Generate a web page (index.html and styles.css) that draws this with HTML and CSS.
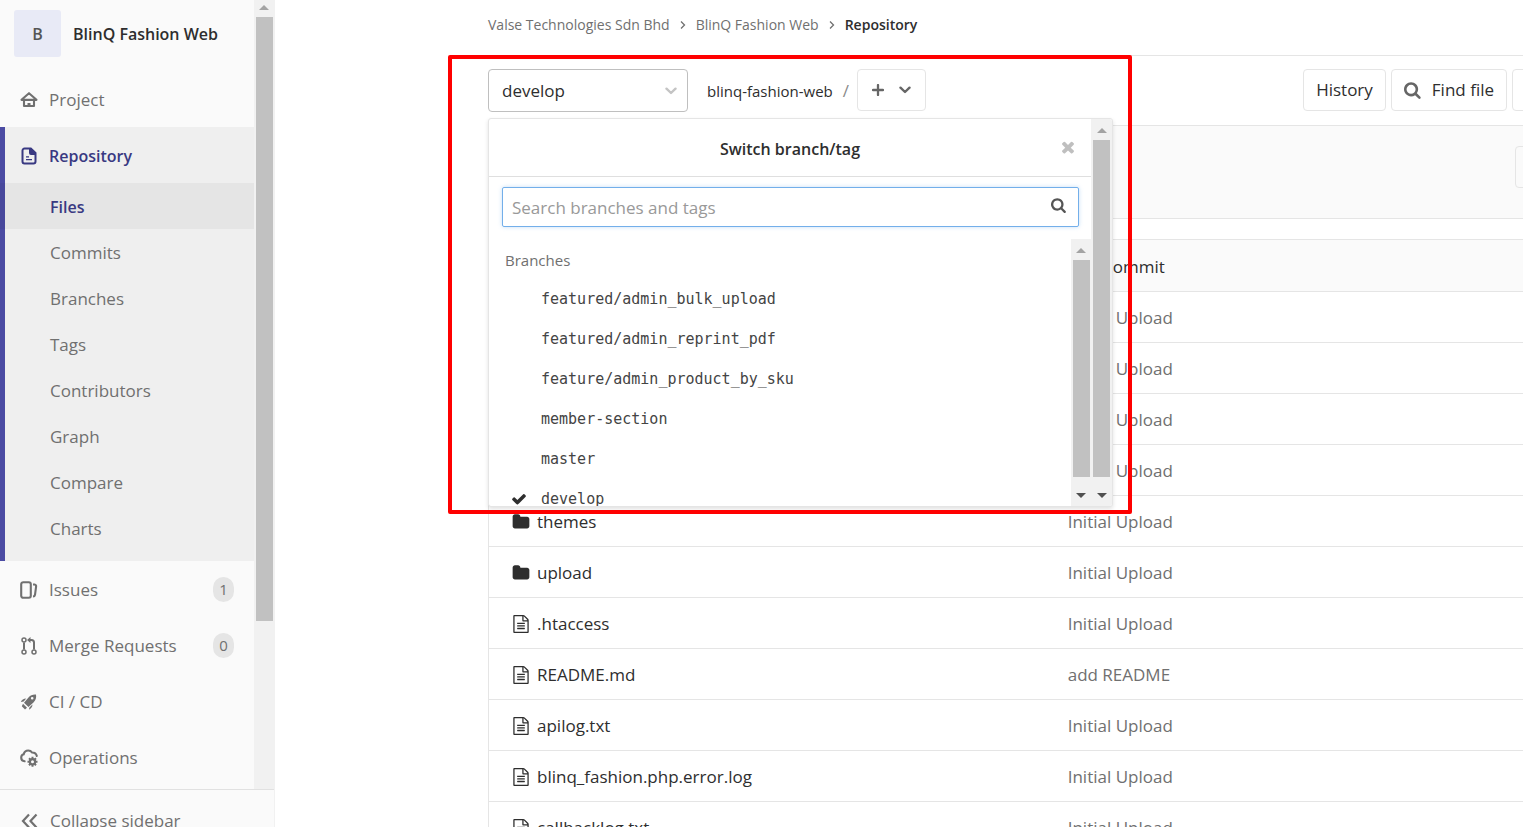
FILE: index.html
```html
<!DOCTYPE html>
<html lang="en">
<head>
<meta charset="utf-8">
<title>Repository · BlinQ Fashion Web</title>
<link rel="stylesheet" href="styles.css">
</head>
<body>
<svg class="sprite" aria-hidden="true">
  <symbol id="folder" viewBox="0 0 1792 1792"><path d="M1728 608v704q0 92-66 158t-158 66h-1216q-92 0-158-66t-66-158v-960q0-92 66-158t158-66h320q92 0 158 66t66 158v32h672q92 0 158 66t66 158z"/></symbol>
  <symbol id="file" viewBox="0 0 1792 1792"><path d="M1596 380q28 28 48 76t20 88v1152q0 40-28 68t-68 28h-1344q-40 0-68-28t-28-68v-1600q0-40 28-68t68-28h896q40 0 88 20t76 48zm-444-244v376h376q-10-29-22-41l-313-313q-12-12-41-22zm384 1528v-1024h-416q-40 0-68-28t-28-68v-416h-768v1536h1280zm-1024-864q0-14 9-23t23-9h704q14 0 23 9t9 23v64q0 14-9 23t-23 9h-704q-14 0-23-9t-9-23v-64zm736 224q14 0 23 9t9 23v64q0 14-9 23t-23 9h-704q-14 0-23-9t-9-23v-64q0-14 9-23t23-9h704zm0 256q14 0 23 9t9 23v64q0 14-9 23t-23 9h-704q-14 0-23-9t-9-23v-64q0-14 9-23t23-9h704z"/></symbol>
  <symbol id="search" viewBox="0 0 1792 1792"><path d="M1152 832q0-185-131.5-316.5t-316.5-131.5-316.5 131.5-131.5 316.5 131.5 316.5 316.5 131.5 316.5-131.5 131.5-316.5zm512 832q0 52-38 90t-90 38q-54 0-90-38l-343-342q-179 124-399 124-143 0-273.5-55.5t-225-150-150-225-55.5-273.5 55.5-273.5 150-225 225-150 273.5-55.5 273.5 55.5 225 150 150 225 55.5 273.5q0 220-124 399l343 343q37 37 37 90z"/></symbol>
  <symbol id="check" viewBox="0 0 1792 1792"><path d="M1671 566q0 40-28 68l-724 724-136 136q-28 28-68 28t-68-28l-136-136-362-362q-28-28-28-68t28-68l136-136q28-28 68-28t68 28l294 295 656-657q28-28 68-28t68 28l136 136q28 28 28 68z"/></symbol>
  <symbol id="times" viewBox="0 0 1792 1792"><path d="M1490 1322q0 40-28 68l-136 136q-28 28-68 28t-68-28l-294-294-294 294q-28 28-68 28t-68-28l-136-136q-28-28-28-68t28-68l294-294-294-294q-28-28-28-68t28-68l136-136q28-28 68-28t68 28l294 294 294-294q28-28 68-28t68 28l136 136q28 28 28 68t-28 68l-294 294 294 294q28 28 28 68z"/></symbol>
  <symbol id="chevron" viewBox="0 0 12 8"><path d="M1.5 1.700 6 6l4.500-4.300" fill="none" stroke="currentColor" stroke-width="2.400" stroke-linecap="round" stroke-linejoin="round"/></symbol>
  <symbol id="angle" viewBox="0 0 6 10"><path d="m1 1.500 3.500 3.500L1 8.500" fill="none" stroke="currentColor" stroke-width="1.300"/></symbol>
</svg>

<aside class="sidebar">
  <div class="sidebar-scroll">
    <nav class="nav">
      <a class="project" href="#"><span class="avatar">B</span><span>BlinQ Fashion Web</span></a>
      <a class="item" href="#"><svg class="icon" viewBox="0 0 18 18"><path d="M1.500 8.800 9 2.200l7.500 6.600M4 8.600v6.400h10V8.600M2 8.900h14" fill="none" stroke="currentColor" stroke-width="2.100" stroke-linecap="round" stroke-linejoin="round"/><path d="M7.500 12h3v3.500h-3z"/></svg>Project</a>
      <div class="group">
        <a class="item current" href="#"><svg class="icon" viewBox="0 0 18 18"><path d="M4.500 1.500h6.300L15.500 6v8.500a2 2 0 0 1-2 2h-9a2 2 0 0 1-2-2v-11a2 2 0 0 1 2-2z" fill="none" stroke="currentColor" stroke-width="2"/><path d="M9 1.500h2.500l4 4V8H11a2 2 0 0 1-2-2zM6 9.300h3v1.300H6zM6 12h6v1.300H6z"/></svg>Repository</a>
        <a class="sub active" href="#">Files</a>
        <a class="sub" href="#">Commits</a>
        <a class="sub" href="#">Branches</a>
        <a class="sub" href="#">Tags</a>
        <a class="sub" href="#">Contributors</a>
        <a class="sub" href="#">Graph</a>
        <a class="sub" href="#">Compare</a>
        <a class="sub" href="#">Charts</a>
      </div>
      <a class="item" href="#"><svg class="icon" viewBox="0 0 18 18"><rect x="1.200" y="1.200" width="9.600" height="15.600" rx="2" fill="none" stroke="currentColor" stroke-width="2.100"/><path d="M13 3.500h1.500c1 .2 1.800 1 1.600 2.200L15 13.800c-.2 1.100-.9 1.700-2 1.700" fill="none" stroke="currentColor" stroke-width="2.100"/></svg>Issues<span class="badge">1</span></a>
      <a class="item" href="#"><svg class="icon" viewBox="0 0 18 18" fill="none" stroke="currentColor"><g class="hollow" stroke-width="1.500"><circle cx="4" cy="3" r="2"/><circle cx="4" cy="15" r="2"/><circle cx="14" cy="15" r="2"/><path d="M4 5.500v7M14 12.500V5.500c0-1.500-.8-2.500-2.500-2.500H9" stroke-width="2"/></g><path d="M10.500 0v6L7 3z" fill="currentColor" stroke="none"/></svg>Merge Requests<span class="badge">0</span></a>
      <a class="item" href="#"><svg class="icon" viewBox="0 0 18 18"><path fill-rule="evenodd" d="M16 1.500c.5 3-.2 5.700-2.300 7.800L8.500 14 4 9.700l4.700-5.500C10.500 2.200 13 1.200 16 1.500zM12.200 4a1.300 1.300 0 1 0 0 2.600 1.300 1.300 0 0 0 0-2.600z"/><path d="M6.200 5.500 3.700 8.500l-2.900.4c.9-2 2.700-3.200 5.400-3.400zM12.500 11.600c-.1 2.600-1.300 4-3.600 5.100l.5-2.300zM3 10.800l4 4-2 1.600-3.200-3.200z"/></svg>CI / CD</a>
      <a class="item" href="#"><svg class="icon" viewBox="0 0 18 18"><path d="M4.600 12.300C2.500 12 1.200 10.500 1.200 8.700c0-1.600 1-3 2.500-3.400C4.200 3 6 1.500 8.200 1.500c1.700 0 3 .7 3.900 2 2.400 0 4.200 1.300 4.700 3.500" fill="none" stroke="currentColor" stroke-width="2.100" stroke-linecap="round"/><circle cx="12.500" cy="12.700" r="2.600" fill="none" stroke="currentColor" stroke-width="2.200"/><path d="M12.500 7.700v2M12.500 15.700v2M7.500 12.700h2M15.500 12.700h2M9 9.200l1.400 1.400M14.600 14.800 16 16.200M16 9.200l-1.400 1.400M10.400 14.800 9 16.200" stroke="currentColor" stroke-width="2"/></svg>Operations</a>
    </nav>
    <div class="bar"><i class="up"></i><i class="thumb side-thumb"></i></div>
  </div>
  <button class="collapse" type="button"><svg class="icon" viewBox="0 0 18 18"><path d="M9 2.500 3 9l6 6.500M16.500 2.500l-6 6.500 6 6.500" fill="none" stroke="currentColor" stroke-width="2.200"/></svg>Collapse sidebar</button>
</aside>

<main class="main">
  <nav class="crumbs">
    <a href="#">Valse Technologies Sdn Bhd</a><svg class="angle"><use href="#angle"/></svg>
    <a href="#">BlinQ Fashion Web</a><svg class="angle"><use href="#angle"/></svg>
    <a class="here" href="#">Repository</a>
  </nav>

  <div class="toolbar">
    <div class="ref">
      <button class="ref-button" type="button">develop<svg class="chevron"><use href="#chevron"/></svg></button>
      <section class="menu" aria-label="Switch branch/tag">
        <div class="menu-body">
          <header class="menu-title">Switch branch/tag<button class="close" type="button" aria-label="Close"><svg><use href="#times"/></svg></button></header>
          <div class="search">
            <input type="text" placeholder="Search branches and tags" aria-label="Search branches and tags">
            <svg><use href="#search"/></svg>
          </div>
          <div class="list">
            <div class="branches">
              <div class="branches-label">Branches</div>
              <a class="branch" href="#">featured/admin_bulk_upload</a>
              <a class="branch" href="#">featured/admin_reprint_pdf</a>
              <a class="branch" href="#">feature/admin_product_by_sku</a>
              <a class="branch" href="#">member-section</a>
              <a class="branch" href="#">master</a>
              <a class="branch" href="#"><svg class="tick"><use href="#check"/></svg>develop</a>
            </div>
            <div class="bar"><i class="up"></i><i class="thumb"></i><i class="down"></i></div>
          </div>
        </div>
        <div class="bar"><i class="up"></i><i class="thumb"></i><i class="down"></i></div>
      </section>
      <div class="annotation"></div>
    </div>
    <a class="path" href="#">blinq-fashion-web</a><span class="slash">/</span>
    <button class="button add" type="button" aria-label="Add to tree"><svg class="plus" viewBox="0 0 12 12"><path d="M6 1v10M1 6h10" stroke="currentColor" stroke-width="2.300" stroke-linecap="round"/></svg><svg class="chevron"><use href="#chevron"/></svg></button>
    <div class="actions">
      <a class="button" href="#">History</a>
      <a class="button" href="#"><svg class="find"><use href="#search"/></svg>Find file</a>
      <button class="button cut" type="button" aria-label="More"></button>
    </div>
  </div>

  <div class="commit"><button class="button cut" type="button" aria-label="Commit"></button></div>

  <table class="files">
    <thead><tr><th class="name"></th><th>Last commit</th></tr></thead>
    <tbody>
      <tr><td></td><td>Initial Upload</td></tr>
      <tr><td></td><td>Initial Upload</td></tr>
      <tr><td></td><td>Initial Upload</td></tr>
      <tr><td></td><td>Initial Upload</td></tr>
      <tr><td><a href="#"><svg><use href="#folder"/></svg>themes</a></td><td>Initial Upload</td></tr>
      <tr><td><a href="#"><svg><use href="#folder"/></svg>upload</a></td><td>Initial Upload</td></tr>
      <tr><td><a href="#"><svg><use href="#file"/></svg>.htaccess</a></td><td>Initial Upload</td></tr>
      <tr><td><a href="#"><svg><use href="#file"/></svg>README.md</a></td><td>add README</td></tr>
      <tr><td><a href="#"><svg><use href="#file"/></svg>apilog.txt</a></td><td>Initial Upload</td></tr>
      <tr><td><a href="#"><svg><use href="#file"/></svg>blinq_fashion.php.error.log</a></td><td>Initial Upload</td></tr>
      <tr><td><a href="#"><svg><use href="#file"/></svg>callbacklog.txt</a></td><td>Initial Upload</td></tr>
    </tbody>
  </table>
</main>
</body>
</html>
```

FILE: styles.css
```css
* { box-sizing: border-box; }
body {
  margin: 0;
  display: flex;
  height: 100vh;
  overflow: hidden;
  background: #fff;
  color: #2e2e2e;
  font: 17px/24px "Open Sans", "Noto Sans", sans-serif;
}
a { color: inherit; text-decoration: none; }
button { font: inherit; color: inherit; background: none; border: 0; padding: 0; margin: 0; }
svg { fill: currentColor; flex: none; }
.sprite { position: absolute; width: 0; height: 0; }
.icon { width: 18px; height: 18px; }
.hollow { fill: none; }

/* Scroll tracks */
.bar {
  display: flex;
  flex-direction: column;
  align-items: center;
  justify-content: space-between;
  flex: none;
  width: 20px;
  padding: 9px 0 8px;
  background: #f1f1f1;
}
.up, .down { border: 5px solid transparent; flex: none; }
.up { border-top: 0; border-bottom-color: #a3a3a3; }
.down { border-bottom: 0; border-top-color: #505050; }
.thumb { flex: 1; width: 17px; margin: 7px 0 16px; background: #c1c1c1; }

/* Sidebar */
.sidebar { flex: none; display: flex; flex-direction: column; width: 275px; border-right: 1px solid #f1f1f1; background: #fafafa; color: #707070; }
.sidebar-scroll { flex: 1; min-height: 0; display: flex; overflow: hidden; }
.sidebar-scroll .bar { padding: 5px 0 0; }
.side-thumb { flex: 0 0 604px; margin: 7px 0 auto; }
.nav { flex: 1; }
.project { display: flex; align-items: center; gap: 12px; height: 72px; padding: 0 14px 5px; color: #2e2e2e; font-size: 16px; font-weight: 600; }
.avatar { width: 47px; height: 47px; border-radius: 3px; background: #e8eaf6; color: #555; display: flex; align-items: center; justify-content: center; }
.item { display: flex; align-items: center; gap: 11px; height: 56px; padding: 1px 20px 0; }
.project + .item { height: 55px; }
.group { background: #efefef; padding-bottom: 10px; box-shadow: inset 5px 0 #4b4ba3; }
.current, .active { color: #393982; font-size: 16px; font-weight: 600; }
.sub { display: flex; align-items: center; height: 46px; padding: 2px 0 0 50px; }
.active { background: rgba(0, 0, 0, .04); }
.badge { margin-left: auto; width: 21px; height: 25px; border-radius: 12px; background: #e5e5e5; font-size: 15px; text-align: center; }
.collapse { flex: none; display: flex; align-items: center; gap: 12px; height: 38px; padding: 24px 20px 0; border-top: 1px solid #e1e1e1; overflow: hidden; white-space: nowrap; }

/* Main column */
.main { flex: 1; min-width: 0; padding-left: 213px; overflow: hidden; }
.crumbs { display: flex; align-items: center; gap: 10px; height: 56px; padding-bottom: 5px; border-bottom: 1px solid #e5e5e5; font-size: 14px; color: #707070; white-space: nowrap; }
.here { color: #2e2e2e; font-weight: 600; }
.angle { width: 6px; height: 10px; }

.toolbar { display: flex; align-items: flex-start; height: 69px; padding-top: 13px; white-space: nowrap; }
.ref { position: relative; flex: none; margin-right: 19px; }
.ref-button { display: flex; align-items: center; justify-content: space-between; width: 200px; height: 43px; padding: 0 10px 0 13px; border: 1px solid #bfbfbf; border-radius: 4px; }
.ref-button .chevron { color: #c4c4c4; }
.chevron { width: 12px; height: 8px; }
.path, .slash { font-size: 15px; line-height: 44px; }
.slash { margin: 0 8px 0 10px; font-size: 17px; color: #8a8a8a; }
.button { display: flex; align-items: center; justify-content: center; flex: none; height: 42px; padding: 0 12px; border: 1px solid #e5e5e5; border-radius: 4px; background: #fff; }
.add { gap: 15px; padding: 0 14px; color: #666; }
.plus { width: 12px; height: 12px; }
.actions { display: flex; gap: 5px; margin-left: auto; margin-right: -37px; }
.find { width: 18px; height: 18px; margin-right: 10px; color: #666; }
.cut { width: 48px; }

.commit { display: flex; align-items: center; justify-content: flex-end; height: 94px; margin-right: -41px; margin-bottom: 20px; padding-bottom: 10px; border: 1px solid #e5e5e5; background: #fafafa; }
.commit .button { background: #fafafa; }

/* File tree */
.files { width: 100%; table-layout: fixed; border-spacing: 0; border: 1px solid #e5e5e5; border-width: 1px 0 0 1px; }
.files th { height: 52px; padding: 2px 10px 0; background: #fafafa; border-bottom: 1px solid #e5e5e5; font-weight: 400; text-align: left; }
.files td { height: 51px; padding: 2px 10px 0; border-bottom: 1px solid #e5e5e5; color: #707070; }
.files .name { width: 55%; }
.files td:first-child { padding-left: 23px; }
.files td a { display: flex; align-items: center; gap: 7px; color: #2e2e2e; }
.files svg { width: 18px; height: 18px; }

/* Branch switcher */
.menu { position: absolute; z-index: 1; top: 49px; left: 0; display: flex; width: 625px; height: 389px; border: 1px solid #e5e5e5; border-radius: 3px; background: #fff; box-shadow: 0 2px 4px rgba(0, 0, 0, .12); overflow: hidden; }
.menu > .bar { width: 21px; }
.menu-body { flex: 1; min-width: 0; display: flex; flex-direction: column; }
.menu-title { position: relative; display: flex; align-items: center; justify-content: center; flex: none; height: 58px; padding-top: 2px; border-bottom: 1px solid #dfdfdf; font-size: 16px; font-weight: 600; }
.close { position: absolute; right: 14px; top: 19px; width: 18px; height: 18px; color: #bfbfbf; }
.close svg { display: block; width: 18px; height: 18px; }
.search { position: relative; flex: none; margin: 10px 12px 12px 13px; }
.search input { display: block; width: 100%; height: 40px; padding: 0 40px 0 9px; border: 1px solid #73afea; border-radius: 2px; outline: 0; font: inherit; box-shadow: 0 0 4px rgba(115, 175, 234, .4); }
.search input::placeholder { color: #999; opacity: 1; }
.search svg { position: absolute; right: 12px; top: 10px; width: 16px; height: 16px; color: #555; }
.list { flex: 1; min-height: 0; display: flex; }
.branches { flex: 1; overflow: hidden; }
.branches-label { padding: 9px 16px 6px; font-size: 15px; color: #707070; }
.branch { display: flex; align-items: center; position: relative; height: 40px; padding: 2px 0 0 52px; font: 15px/24px "DejaVu Sans Mono", monospace; color: #444; }
.tick { position: absolute; left: 22px; top: 13px; width: 16px; height: 16px; color: #2e2e2e; }

/* Highlight frame */
.annotation { position: absolute; z-index: 2; top: -14px; left: -40px; width: 684px; height: 459px; border: 4px solid #f00; border-radius: 2px; pointer-events: none; }
```
